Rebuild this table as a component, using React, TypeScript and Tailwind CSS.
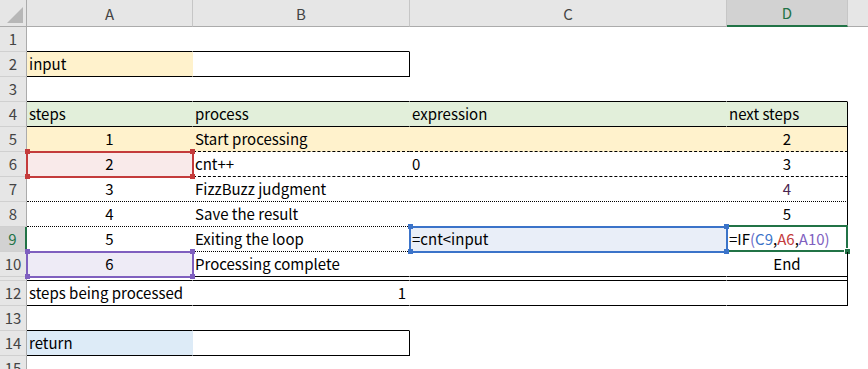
import type { ReactNode } from 'react';

// column widths incl. the right-hand gridline pixel
const W = {
  A: 'w-[166px]',
  B: 'w-[217px]',
  C: 'w-[317px]',
  D: 'w-[121px]',
};

function ColHead({ w, label, active }: { w: string; label: string; active?: boolean }) {
  return (
    <div
      className={`${w} shrink-0 flex items-center justify-center border-r border-r-[#c6c6c6] ${
        active
          ? 'bg-[#d2d2d2] text-[#217346] border-b-2 border-b-[#217346]'
          : 'text-[#444] border-b border-b-[#ababab]'
      }`}
    >
      {label}
    </div>
  );
}

function RowHead({ n, active }: { n?: number; active?: boolean }) {
  return (
    <div
      className={`w-[27px] shrink-0 flex items-center justify-center pb-[2px] border-b border-b-[#d0d0d0] ${
        active
          ? 'bg-[#d2d2d2] text-[#217346] border-r-2 border-r-[#217346]'
          : 'bg-[#e6e6e6] text-[#444] border-r border-r-[#ababab]'
      }`}
    >
      {n}
    </div>
  );
}

function Row({ n, active, children, h = 'h-[25px]' }: { n?: number; active?: boolean; children?: ReactNode; h?: string }) {
  return (
    <div className={`flex ${h}`}>
      <RowHead n={n} active={active} />
      {children}
      <div className="flex-1" />
    </div>
  );
}

function Cell({ w, className = '', children }: { w: string; className?: string; children?: ReactNode }) {
  return (
    <div
      className={`relative h-full shrink-0 flex items-center px-[2px] pb-[2px] whitespace-nowrap border-r border-b border-transparent ${w} ${className}`}
    >
      {children}
    </div>
  );
}

const TONES = {
  red: { box: 'border-[#c43b3b]', dot: 'bg-[#c43b3b]' },
  blue: { box: 'border-[#3b73c9]', dot: 'bg-[#3b73c9]' },
  purple: { box: 'border-[#7f5fbf]', dot: 'bg-[#7f5fbf]' },
};

// coloured outline Excel draws round a range referenced by the formula being edited
function RefBox({ tone }: { tone: keyof typeof TONES }) {
  const t = TONES[tone];
  return (
    <>
      <div className={`absolute -top-px -bottom-[2px] -left-px -right-[2px] border-2 z-10 ${t.box}`} />
      <div className={`absolute -top-[3px] -left-[2px] size-[5px] z-10 ${t.dot}`} />
      <div className={`absolute -top-[3px] -right-[3px] size-[5px] z-10 ${t.dot}`} />
      <div className={`absolute -bottom-[3px] -left-[2px] size-[5px] z-10 ${t.dot}`} />
      <div className={`absolute -bottom-[3px] -right-[3px] size-[5px] z-10 ${t.dot}`} />
    </>
  );
}

function ActiveBox() {
  return (
    <>
      <div className="absolute -top-[2px] -bottom-px -left-px -right-px border-2 border-[#217346]" />
      <div className="absolute -bottom-[3px] -right-[3px] size-[5px] bg-[#217346] outline outline-white" />
    </>
  );
}

export default function App() {
  const dash = 'border-b-black [border-bottom-style:dashed]';
  const dot = 'border-b-black [border-bottom-style:dotted]';

  return (
    <div className="w-[868px] h-[369px] overflow-hidden bg-white text-black text-[15px] leading-none font-['Noto_Sans_CJK_JP','Noto_Sans',sans-serif]">
      {/* column headers */}
      <div className="flex h-[27px] bg-[#e6e6e6]">
        <div className="w-[27px] shrink-0 border-r border-b border-[#ababab] flex items-end justify-end">
          <svg width="26" height="26" viewBox="0 0 26 26">
            <polygon points="23,7 23,23 7,23" fill="#b7b7b7" />
          </svg>
        </div>
        <ColHead w={W.A} label="A" />
        <ColHead w={W.B} label="B" />
        <ColHead w={W.C} label="C" />
        <ColHead w={W.D} label="D" active />
        <div className="flex-1 border-b border-b-[#ababab]" />
      </div>

      <Row n={1}>
        <Cell w={W.A} className="border-b-black" />
        <Cell w={W.B} className="border-b-black" />
      </Row>
      <Row n={2}>
        <Cell w={W.A} className="bg-[#fff2cc] border-b-black">input</Cell>
        <Cell w={W.B} className="border-b-black border-r-black" />
      </Row>
      <Row n={3}>
        <Cell w={W.A} className="border-b-black" />
        <Cell w={W.B} className="border-b-black" />
        <Cell w={W.C} className="border-b-black" />
        <Cell w={W.D} className="border-b-black" />
      </Row>
      <Row n={4}>
        <Cell w={W.A} className="bg-[#e2efda] border-b-black">steps</Cell>
        <Cell w={W.B} className="bg-[#e2efda] border-b-black">process</Cell>
        <Cell w={W.C} className="bg-[#e2efda] border-b-black">expression</Cell>
        <Cell w={W.D} className="bg-[#e2efda] border-b-black border-r-black">next steps</Cell>
      </Row>
      <Row n={5}>
        <Cell w={W.A} className={`bg-[#fff2cc] justify-center ${dash}`}>1</Cell>
        <Cell w={W.B} className={`bg-[#fff2cc] ${dash}`}>Start processing</Cell>
        <Cell w={W.C} className={`bg-[#fff2cc] ${dash}`} />
        <Cell w={W.D} className={`bg-[#fff2cc] justify-center border-r-black ${dash}`}>2</Cell>
      </Row>
      <Row n={6}>
        <Cell w={W.A} className={`bg-[#f9eaea] justify-center ${dash}`}>
          2
          <RefBox tone="red" />
        </Cell>
        <Cell w={W.B} className={dash}>cnt++</Cell>
        <Cell w={W.C} className={dash}>0</Cell>
        <Cell w={W.D} className={`justify-center border-r-black ${dash}`}>3</Cell>
      </Row>
      <Row n={7}>
        <Cell w={W.A} className={`justify-center ${dot}`}>3</Cell>
        <Cell w={W.B} className={dot}>FizzBuzz judgment</Cell>
        <Cell w={W.C} className={dot} />
        <Cell w={W.D} className={`justify-center text-[#4a2450] border-r-black ${dot}`}>4</Cell>
      </Row>
      <Row n={8}>
        <Cell w={W.A} className={`justify-center ${dot}`}>4</Cell>
        <Cell w={W.B} className={dot}>Save the result</Cell>
        <Cell w={W.C} className={dot} />
        <Cell w={W.D} className={`justify-center border-r-black ${dot}`}>5</Cell>
      </Row>
      <Row n={9} active>
        <Cell w={W.A} className={`justify-center ${dot}`}>5</Cell>
        <Cell w={W.B} className={dot}>Exiting the loop</Cell>
        <Cell w={W.C} className={`bg-[#e9eef8] ${dot}`}>
          =cnt&lt;input
          <RefBox tone="blue" />
        </Cell>
        <Cell w={W.D} className={`border-r-black ${dot}`}>
          =IF<span className="text-[#6f6ac8]">(</span>
          <span className="text-[#3b73c9]">C9</span>,<span className="text-[#c43b3b]">A6</span>,
          <span className="text-[#7f5fbf]">A10</span>
          <span className="text-[#7f5fbf]">)</span>
          <ActiveBox />
        </Cell>
      </Row>
      <Row n={10}>
        <Cell w={W.A} className="bg-[#eeebf6] justify-center border-b-black">
          6
          <RefBox tone="purple" />
        </Cell>
        <Cell w={W.B} className="border-b-black">Processing complete</Cell>
        <Cell w={W.C} className="border-b-black" />
        <Cell w={W.D} className="justify-center border-b-black border-r-black">End</Cell>
      </Row>
      {/* row 11 is hidden: only its double line shows */}
      <Row h="h-[4px]">
        <Cell w={W.A} className="border-b-black" />
        <Cell w={W.B} className="border-b-black" />
        <Cell w={W.C} className="border-b-black" />
        <Cell w={W.D} className="border-b-black border-r-black" />
      </Row>
      <Row n={12}>
        <Cell w={W.A} className="border-b-black">steps being processed</Cell>
        <Cell w={W.B} className="justify-end pr-[3px] border-b-black">1</Cell>
        <Cell w={W.C} className="border-b-black" />
        <Cell w={W.D} className="border-b-black border-r-black" />
      </Row>
      <Row n={13}>
        <Cell w={W.A} className="border-b-black" />
        <Cell w={W.B} className="border-b-black" />
      </Row>
      <Row n={14}>
        <Cell w={W.A} className="bg-[#ddebf7] border-b-black">return</Cell>
        <Cell w={W.B} className="border-b-black border-r-black" />
      </Row>
      <Row n={15} />
    </div>
  );
}
